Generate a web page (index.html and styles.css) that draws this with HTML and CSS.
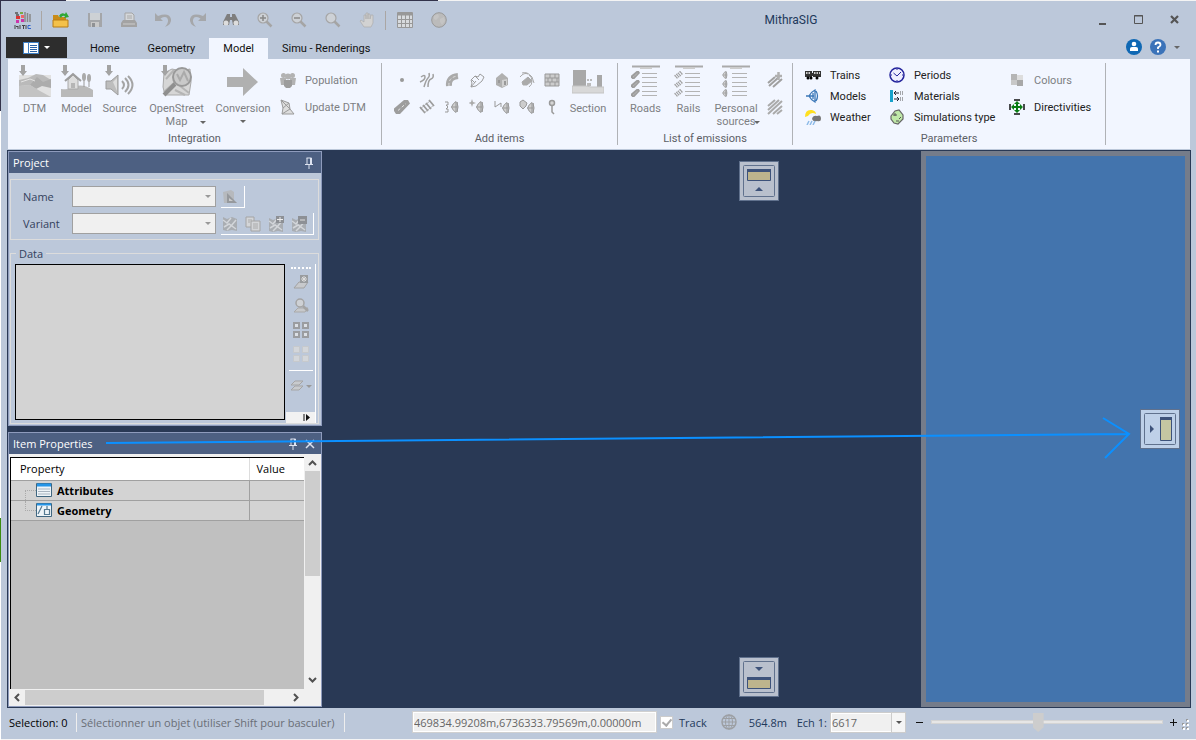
FILE: index.html
```html
<!DOCTYPE html>
<html lang="en">
<head>
  <meta charset="UTF-8">
  <meta name="viewport" content="width=device-width, initial-scale=1">
  <title>MithraSIG</title>
  <link rel="stylesheet" href="styles.css">
</head>
<body>

<!-- shared shapes -->
<svg class="defs" width="0" height="0" aria-hidden="true">
  <symbol id="down" viewBox="0 0 8 12"><path d="M2 0h4v6h2L4 11 0 6h2z" fill="#a3a3a3"/></symbol>
  <symbol id="lens" viewBox="0 0 16 16"><path d="M9.500 9.500L14.500 14.500" stroke="#a5a5a5" stroke-width="2.500"/><circle cx="6" cy="6" r="5" fill="#cdd1d6" stroke="#a5a5a5" stroke-width="1.200"/></symbol>
  <symbol id="src" viewBox="0 0 8 12"><path d="M5 .5Q2 2 .5 6 2 10 5 11.500zM6 1v10q2-5 0-10z" fill="#cfcfcf" stroke="#999"/><path d="M.5 6H6" stroke="#999"/></symbol>
  <symbol id="road" viewBox="0 0 16 14"><path d="M0 8.500L10 0h4l2 3.500L6 14H2L0 11z" fill="#9d9d9d"/><path d="M4 10.500l8-7" stroke="#e4e4e4" stroke-width="1" stroke-dasharray="3 2"/></symbol>
  <symbol id="rail" viewBox="0 0 16 14"><path d="M1 9L11 1M5 13L15 5" stroke="#b4b4b4"/><path d="M1 7l5 6M4 5l5 6M7 3l5 6M10 0l5 6" stroke="#9d9d9d" stroke-width="1.800"/></symbol>
  <symbol id="map" viewBox="0 0 16 14"><path d="M1 0l4 2 5-2 5 2v12l-5-1-5 1-4-1z" fill="#a9adb2"/><path d="M1 3l4 3 4-5M14 3L9 9l-4 4M2 10l5-3 7 5" fill="none" stroke="#d3d6da" stroke-width="1.500"/></symbol>
  <symbol id="pin" viewBox="0 0 8 12"><path d="M1.500 1h5M2 1v6M5.500 1v6M6.500 1v6M0 7.500h8M4 8v4" fill="none" stroke="#dde3f0"/></symbol>
</svg>

<div class="window">
  <header class="titlebar">
    <svg class="logo" width="18" height="18" viewBox="0 0 18 18"><path d="M1 2h3M2 4h3" stroke="#555" stroke-width="1.500"/><path d="M6 1h3v2H6z" fill="#7a4"/><path d="M2 5h4v3H2z" fill="#d33"/><path d="M7 4h3v3H7z" fill="#e66"/><path d="M2 9h3v3H2zM7 8h3v3H7z" fill="#c3a"/><path d="M11 1v10M13.500 2v9M16 3v8" stroke="#888" stroke-width="1.500"/><path d="M1 14v4M2 15l1 1 1-1v3M6 14v4M8 14.500h3M9.500 14v4M12 14v4" fill="none" stroke="#444"/><path d="M16.500 14.500H14v3h3" fill="none" stroke="#36c"/></svg>
    <i class="bar"></i>
    <nav class="quick" aria-label="Quick access">
      <button aria-label="Open"><svg width="18" height="16" viewBox="0 0 18 16"><path d="M1 3h5l1 2h7v9H1z" fill="#c98b18"/><path d="M1 8h15v7H1z" fill="#f4c14a" stroke="#b87d14"/><path d="M7 4q2-4 6-2l1-2 3 5-5 1 1-2q-3-1-4 2z" fill="#2fa836"/></svg></button>
      <button aria-label="Save"><svg width="16" height="16" viewBox="0 0 16 16"><path d="M1 1h14v14H2l-1-1z" fill="#a4a6a9"/><path d="M3 1h10v7H3z" fill="#cdd1d5"/><path d="M4 10h8v5H4z" fill="#c8c8c8"/><path d="M5 11h3v4H5z" fill="#8f9194"/></svg></button>
      <button aria-label="Print"><svg width="16" height="16" viewBox="0 0 16 16"><path d="M4 1h7l2 2v6H4z" fill="#d4d7da" stroke="#a5a5a5"/><path d="M6 4h5M6 6h5" stroke="#aaa"/><path d="M2 8h12l2 3v4H0v-4z" fill="#a3a3a3"/><path d="M2 12h12" stroke="#ccc"/></svg></button>
      <button aria-label="Undo"><svg width="17" height="16" viewBox="0 0 17 16"><path d="M0 1v8h8L5.500 6.500Q12 3 13 8q.5 3-3 7 7-3 6-8Q14 0 3 4z" fill="#a5a7aa"/></svg></button>
      <button aria-label="Redo"><svg width="17" height="16" viewBox="0 0 17 16"><path d="M17 1v8H9l2.500-2.500Q5 3 4 8q-.5 3 3 7Q0 12 1 7q2-7 13-3z" fill="#a5a7aa"/></svg></button>
      <button aria-label="Find"><svg width="16" height="16" viewBox="0 0 16 16"><path d="M4 2h3v3h2V2h3l4 8v3h-6l-1-5H7l-1 5H0v-3z" fill="#7e7e7e"/><circle cx="3" cy="11" r="2.500" fill="#ddd"/><circle cx="13" cy="11" r="2.500" fill="#ddd"/></svg></button>
      <button aria-label="Zoom in"><svg width="16" height="16"><use href="#lens" width="16" height="16"/><path d="M3 6h6M6 3v6" stroke="#888" stroke-width="1.500"/></svg></button>
      <button aria-label="Zoom out"><svg width="16" height="16"><use href="#lens" width="16" height="16"/><path d="M3 6h6" stroke="#888" stroke-width="1.500"/></svg></button>
      <button aria-label="Zoom"><svg width="16" height="16"><use href="#lens" width="16" height="16"/></svg></button>
      <button aria-label="Pan"><svg width="16" height="16" viewBox="0 0 16 16"><path d="M5 15L1 9l1-1 3 2V3h2v4-6h2v6V2h2v5l1-4h2v8l-2 4z" fill="#d2d2d2" stroke="#adadad" stroke-width=".7"/></svg></button>
    </nav>
    <i class="bar bar2"></i>
    <nav class="quick" aria-label="Views">
      <button aria-label="Table"><svg width="16" height="16" viewBox="0 0 16 16"><path d="M.5.5h15v15H.5z" fill="#d8dbde" stroke="#989898"/><path d="M1 2h14" stroke="#989898" stroke-width="3"/><path d="M1 7.500h14M1 11.500h14M4.500 3v12M8.500 3v12M12.500 3v12" stroke="#989898"/></svg></button>
      <button aria-label="Globe"><svg width="16" height="16" viewBox="0 0 16 16"><circle cx="8" cy="8" r="7.300" fill="#bbb" stroke="#999"/><path d="M3 4l4-2 1 3-3 3-2-1zM9 7l4-2 1 4-3 4-2-3z" fill="#c4c4c4"/></svg></button>
    </nav>
    <h1>MithraSIG</h1>
    <div class="controls">
      <button aria-label="Minimize"><svg width="10" height="12"><path d="M1 10h7" stroke="#555" stroke-width="2"/></svg></button>
      <button aria-label="Maximize"><svg width="10" height="10"><path d="M.5.5h8v8h-8z" fill="none" stroke="#555"/><path d="M0 1h9" stroke="#555"/></svg></button>
      <button aria-label="Close"><svg width="10" height="10"><path d="M1 1l7 7M8 1L1 8" stroke="#555" stroke-width="2.200"/></svg></button>
    </div>
  </header>

  <nav class="tabs">
    <button class="file" aria-label="File"><svg width="16" height="12" viewBox="0 0 16 12"><path d="M0 0h16v12H0z" fill="#3f7fc4"/><path d="M1 1h4v10H1zM6 1h9v10H6z" fill="#fff"/><path d="M7 3.500h7M7 5.500h7M7 7.500h7M7 9.500h7" stroke="#2a62a8"/></svg><i class="caret"></i></button>
    <a href="#home">Home</a>
    <a href="#geometry">Geometry</a>
    <a href="#model" class="active">Model</a>
    <a href="#simu">Simu - Renderings</a>
    <div class="help">
      <button aria-label="Account"><svg width="16" height="16"><circle cx="8" cy="8" r="8" fill="#0f68b4"/><circle cx="8" cy="5" r="2.300" fill="#fff"/><path d="M4 12V9.500Q4 8 6 8h4q2 0 2 1.500V12z" fill="#fff"/></svg></button>
      <button aria-label="Help"><svg width="16" height="16"><circle cx="8" cy="8" r="8" fill="#3b73b9"/><path d="M5.500 6Q5.500 3.500 8 3.500T10.500 6Q10.500 7 8 8.500V10" fill="none" stroke="#fff" stroke-width="1.800"/><path d="M7 11.500h2v2H7z" fill="#fff"/></svg></button>
      <button aria-label="More"><i class="caret"></i></button>
    </div>
  </nav>

  <section class="ribbon">
    <div class="group integration">
      <div class="tools">
        <button class="big dtm"><svg width="32" height="32" viewBox="0 0 32 32"><path d="M0 10h32v22H0z" fill="#e1e1e1"/><path d="M0 15l9-2 8-4 7 1 8 5v5H16L0 21z" fill="#bababa"/><path d="M11 20l7-8 6 5 8-3v9l-9-2-6 3z" fill="#acacac"/><path d="M0 21l11-1 10 6 11 6H0z" fill="#c3c3c3"/><path d="M2 17l9-3 5 2" fill="none" stroke="#e4e4e4"/><use href="#down" width="8" height="12"/></svg>DTM</button>
        <button class="big"><svg width="32" height="32" viewBox="0 0 32 32"><path d="M0 24q9 1 13-2 8-4 19 3v7H0z" fill="#b9b9b9"/><path d="M7 15v9h10v-9l-5-5z" fill="#ddd" stroke="#aaa"/><path d="M4 16l8-7 8 7" fill="none" stroke="#9d9d9d" stroke-width="2"/><path d="M10 18h4v5h-4z" fill="#b5b5b5"/><path d="M23 10v12M28 11v11" stroke="#999"/><ellipse cx="23" cy="12" rx="2" ry="4" fill="#aaa"/><ellipse cx="28" cy="13" rx="2" ry="4" fill="#aaa"/><use href="#down" width="8" height="12"/></svg>Model</button>
        <button class="big"><svg width="30" height="32" viewBox="0 0 30 32"><path d="M1 16h5l7-6v20l-7-6H1z" fill="#bdbdbd" stroke="#9c9c9c"/><path d="M8 17l4-4v13" fill="#ddd"/><path d="M17 16q4 4 0 8M20 13q7 7 0 14M23 11q9 9 0 18" fill="none" stroke="#a4a4a4" stroke-width="2"/><use href="#down" width="8" height="12"/></svg>Source</button>
        <button class="big osm"><svg width="32" height="32" viewBox="0 0 32 32"><path d="M3 8l8-4 9 2 9-2 1 13-2 13H4l-2-8z" fill="#d6d6d6" stroke="#aaa"/><path d="M3 27l11-10 14 11M5 14l8-9M14 25l10 5" fill="none" stroke="#b4b4b4" stroke-width="2"/><circle cx="21" cy="12" r="9" fill="#c9c9c9" stroke="#999" stroke-width="2"/><path d="M16 9l3 6 4-8 4 9" fill="none" stroke="#aaa" stroke-width="2"/><path d="M14 19L3 30" stroke="#8f8f8f" stroke-width="4"/><use href="#down" width="8" height="12"/></svg>OpenStreet<br>Map<i class="caret"></i></button>
        <button class="big conv"><svg width="32" height="32" viewBox="0 0 32 32"><path d="M0 12h16V3l15 14-15 14v-9H0z" fill="#b0b0b0"/></svg>Conversion<i class="caret"></i></button>
        <div class="stack off">
          <button><svg width="16" height="16" viewBox="0 0 16 16"><circle cx="3.500" cy="3.500" r="2.500"/><circle cx="12.500" cy="3.500" r="2.500"/><circle cx="8" cy="4.500" r="3"/><path d="M0 6h6v7H1zM10 6h6l-1 7h-5z"/><path d="M4 8h8v6l-2 2H6l-2-2z" fill="#9c9c9c"/></svg>Population</button>
          <button><svg width="16" height="16" viewBox="0 0 16 16"><path d="M1 1l8 3 1 6 4 5H2L3 9z" fill="#ddd" stroke="#9a9a9a"/><path d="M1 1l9 9-8 5M9 4l-6 5" fill="none" stroke="#9a9a9a"/></svg>Update DTM</button>
        </div>
      </div>
      <h2>Integration</h2>
    </div>

    <div class="group items">
      <div class="tools">
        <div class="icons">
          <button aria-label="Point"><svg width="16" height="16"><circle cx="8" cy="8" r="2" fill="#999"/></svg></button>
          <button aria-label="Contour"><svg width="16" height="16" fill="none" stroke="#a0a0a0" stroke-width="1.500"><path d="M2 5q4-3 4 0t-5 5M10 1q1 3-1 5t-4 9M14 2q1 4-2 5t-3 8"/></svg></button>
          <button aria-label="Curve"><svg width="16" height="16"><path d="M5 14Q4 5 14 4" fill="none" stroke="#aaa" stroke-width="6"/><path d="M5 14Q4 5 14 4" fill="none" stroke="#ddd" stroke-dasharray="3 2"/></svg></button>
          <button aria-label="Polygon"><svg width="16" height="16" fill="none" stroke="#9d9d9d"><path d="M2 8l4-4 3 1 2-3 4 3-2 4-6 5-5 1 1-4zM2 15l5-6M6 4l4 4M3 8l3 3"/></svg></button>
          <button aria-label="Building"><svg width="16" height="16"><path d="M8 1l6 5v7l-6 3-6-3V6z" fill="#b0b0b0"/><path d="M8 8l5-1v6l-5 2z" fill="#d0d0d0"/><path d="M10 9h2v4h-2zM4 8h2v3H4z" fill="#999"/></svg></button>
          <button aria-label="Noise area"><svg width="16" height="16" fill="none" stroke="#aaa"><path d="M3 10l6-5 4 4-5 4H4z" fill="#aaa"/><path d="M1 5q4-5 8-3M3 1q5-2 10 4l2 6M10 3q3 2 3 6t-3 6"/></svg></button>
          <button aria-label="Wall"><svg width="16" height="16"><path d="M1 2h14v12H1z" fill="#ccc" stroke="#999"/><path d="M1 6h14M1 10h14M6 2v4M11 2v4M4 6v4M8 6v4M13 6v4M6 10v4M11 10v4" stroke="#999"/></svg></button>
          <button aria-label="Road"><svg width="16" height="16"><use href="#road" width="16" height="16"/></svg></button>
          <button aria-label="Railway"><svg width="16" height="16"><use href="#rail" width="16" height="16"/></svg></button>
          <button aria-label="Line source"><svg width="16" height="16"><path d="M1 3h3v3H2l2 2-2 2h2v3H1" fill="none" stroke="#999"/><use href="#src" x="7" y="2" width="8" height="12"/></svg></button>
          <button aria-label="Point source"><svg width="16" height="16"><path d="M3 0l1 3 3 1-3 1-1 3-1-3-3-1 3-1z" fill="#aaa"/><use href="#src" x="7" y="2" width="8" height="12"/></svg></button>
          <button aria-label="Vertical source"><svg width="16" height="16"><path d="M1 2v6l6-4v4" fill="none" stroke="#999"/><use href="#src" x="8" y="3" width="8" height="12"/></svg></button>
          <button aria-label="Area source"><svg width="16" height="16"><path d="M1 3l3-2 4 3-1 3-3 3-3-3z" fill="#ccc" stroke="#999"/><use href="#src" x="8" y="3" width="8" height="12"/></svg></button>
          <button aria-label="Receiver"><svg width="16" height="16" fill="none" stroke="#999" stroke-width="1.500"><circle cx="8" cy="4" r="2.500" fill="#d5d5d5"/><path d="M8 7v6l2 2"/></svg></button>
        </div>
        <button class="big section"><svg width="32" height="32" viewBox="0 0 32 32"><path d="M1 5h13v16H1zM25 10h5v12h-5z" fill="#a8a8a8"/><path d="M15 14h2v2h-2zM18 14h2v2h-2zM15 18h4v3h-4z" fill="#bbb"/><path d="M0 21h14l5 1h13v6H0z" fill="#d8d8d8" stroke="#c4c4c4"/></svg>Section</button>
      </div>
      <h2>Add items</h2>
    </div>

    <div class="group emissions">
      <div class="tools">
        <button class="big"><svg width="32" height="32" viewBox="0 0 32 32"><path d="M2 1.500h28" stroke="#aaa" stroke-width="2"/><path d="M10 3h12" stroke="#ccc" stroke-width="2"/><path d="M12 8.500h15M12 12.500h15M12 17.500h15M12 21.500h15M12 26.500h15M12 30.500h15" stroke="#b4b4b4"/><use href="#road" x="1" y="6" width="9" height="8"/><use href="#road" x="1" y="15" width="9" height="8"/><use href="#road" x="1" y="24" width="9" height="8"/></svg>Roads</button>
        <button class="big"><svg width="32" height="32" viewBox="0 0 32 32"><path d="M2 1.500h28" stroke="#aaa" stroke-width="2"/><path d="M10 3h12" stroke="#ccc" stroke-width="2"/><path d="M12 8.500h15M12 12.500h15M12 17.500h15M12 21.500h15M12 26.500h15M12 30.500h15" stroke="#b4b4b4"/><use href="#rail" x="1" y="6" width="9" height="8"/><use href="#rail" x="1" y="15" width="9" height="8"/><use href="#rail" x="1" y="24" width="9" height="8"/></svg>Rails</button>
        <button class="big pers"><svg width="32" height="32" viewBox="0 0 32 32"><path d="M2 1.500h28" stroke="#aaa" stroke-width="2"/><path d="M10 3h12" stroke="#ccc" stroke-width="2"/><path d="M12 8.500h15M12 12.500h15M12 17.500h15M12 21.500h15M12 26.500h15M12 30.500h15" stroke="#b4b4b4"/><use href="#src" x="2" y="6" width="6" height="8"/><use href="#src" x="2" y="15" width="6" height="8"/><use href="#src" x="2" y="24" width="6" height="8"/></svg>Personal<br>sources<i class="caret"></i></button>
        <div class="icons one">
          <button aria-label="Add road emission"><svg width="16" height="16"><path d="M1 11l7-6M2 14l10-9M6 15l9-8" stroke="#a0a0a0" stroke-width="2"/><path d="M8 4h7M11.500 0v8" stroke="#b0b0b0" stroke-width="2.500"/></svg></button>
          <button aria-label="Edit road emission"><svg width="16" height="16"><path d="M1 7l7-6M1 11L12 1M1 15L15 2M6 15l9-8M10 15l5-4" stroke="#aaa" stroke-width="2"/></svg></button>
        </div>
      </div>
      <h2>List of emissions</h2>
    </div>

    <div class="group params">
      <div class="tools">
        <div class="stack three">
          <button><svg width="16" height="16"><path d="M0 4h7v6H0zM8 4h8v6H8zM6 6h3v3H6z" fill="#333"/><path d="M1 6h5M9 6h6" stroke="#ccc" stroke-width="2" stroke-dasharray="1.500 1"/><circle cx="3" cy="11" r="1.500"/><circle cx="6" cy="11" r="1.500"/><circle cx="12" cy="11" r="1.500"/></svg>Trains</button>
          <button><svg width="16" height="16" fill="none" stroke="#3c78b8" stroke-width="1.300"><path d="M10 2v12Q6 12 4 8q2-4 6-6zM8 5v6M11 3q3 5 0 10M1 8h8"/></svg>Models</button>
          <button><svg width="16" height="16"><path d="M0 8Q0 0 7 1q4 1 4 4-5-3-8 2z" fill="#ffe020"/><path d="M7 10q1-4 5-3 4-2 4 3 0 3-4 2-4 1-5-2z" fill="#777"/><path d="M4 12l-2 4M7 12l-2 4M10 12l-2 4" stroke="#8dbbe8" stroke-width="1.500"/></svg>Weather</button>
        </div>
        <div class="stack three wide">
          <button><svg width="16" height="16"><circle cx="8" cy="8" r="7" fill="#eef" stroke="#24249c" stroke-width="1.500"/><path d="M4.500 6L8 9l4-4M8 2v1M8 13v1M2 8h1M13 8h1" fill="none" stroke="#24249c"/></svg>Periods</button>
          <button><svg width="16" height="16"><path d="M1 2h3v12H1z" fill="#17a2cc"/><path d="M5 5h5M7 3L5 5l2 2M5 11h5M8 9l2 2-2 2" fill="none" stroke="#223"/><path d="M11 4h4M11 6h4M11 10h4M11 12h4" stroke="#555" stroke-dasharray="1 1"/></svg>Materials</button>
          <button><svg width="16" height="16"><path d="M2 7l4-5 4-1 4 5v4l-5 5-4-1-3-4z" fill="#bfe8a8" stroke="#666" stroke-width="1.200"/><path d="M4 6h4M6 4v3M10 10l2-2M7 12h3" stroke="#555"/></svg>Simulations type</button>
        </div>
        <div class="stack">
          <button class="off"><svg width="16" height="16"><path d="M2 2h6v6H2z" fill="#b5b5b5"/><path d="M8 3h6v5H8z" fill="#ddd"/><path d="M2 8h6v5H2z" fill="#c8c8c8"/><path d="M8 8h6v6H8z" fill="#a8a8a8"/></svg>Colours</button>
          <button><svg width="16" height="16"><path d="M1 5v6M15 5v6M5 1h6M5 15h6" stroke="#111" stroke-width="1.500"/><path d="M8 3v10M3 8h10" stroke="#0a7d14" stroke-width="2"/><path d="M8 2l3 3H5zM8 14l3-3H5zM2 8l3-3v6zM14 8l-3-3v6z" fill="#0a7d14"/></svg>Directivities</button>
        </div>
      </div>
      <h2>Parameters</h2>
    </div>
  </section>

  <main class="workspace">
    <aside class="side">
      <section class="panel project">
        <h3>Project<svg width="8" height="12"><use href="#pin" width="8" height="12"/></svg></h3>
        <div class="box">
          <div class="field">
            <label for="name">Name</label>
            <span class="select"><select id="name"></select></span>
            <div class="minibar"><button aria-label="Edit project"><svg width="16" height="16"><path d="M1 3l8-2 3 2v9l3 2H2z" fill="#b6b9bd"/><path d="M5 4v10h10z" fill="#96999d"/><path d="M7 9v3h4z" fill="#ccc"/></svg></button></div>
          </div>
          <div class="field">
            <label for="variant">Variant</label>
            <span class="select"><select id="variant"></select></span>
            <div class="minibar">
              <button aria-label="Edit variant"><svg width="16" height="16"><use href="#map" y="1" width="16" height="14"/></svg></button>
              <button aria-label="Copy variant"><svg width="16" height="16"><path d="M1 1h8v10H1z" fill="#d3d5d8" stroke="#a4a4a4"/><path d="M6 5h9v10H6z" fill="#d3d5d8" stroke="#a4a4a4"/><path d="M3 4h4M3 6h2M8 8h5M8 10h5M8 12h5" stroke="#aaa"/></svg></button>
              <button aria-label="Add variant"><svg width="16" height="16"><use href="#map" y="2" width="16" height="14"/><path d="M8 0h8v7H8z" fill="#8d9095"/><path d="M9 3.500h6M12 1v5" stroke="#eee"/></svg></button>
              <button aria-label="Remove variant"><svg width="16" height="16"><use href="#map" y="2" width="16" height="14"/><path d="M7 0h9v8H7z" fill="#8d9095"/><path d="M9 4h5" stroke="#ddd"/></svg></button>
            </div>
          </div>
        </div>
        <fieldset class="data">
          <legend>Data</legend>
          <div class="list"></div>
          <div class="vbar">
            <i class="dots"></i>
            <button aria-label="New layer"><svg width="16" height="16"><path d="M1 14l5-6h9l-4 6z" fill="#c7c9cc" stroke="#a2a2a2"/><path d="M7 1h8v8H7z" fill="#999c9f"/><path d="M11 2v6M8 5h6M9 3l4 4M13 3L9 7" stroke="#ddd"/></svg></button>
            <button aria-label="Show layer"><svg width="16" height="16"><path d="M1 14l4-4h10l-3 4z" fill="#c7c9cc" stroke="#a9a9a9"/><path d="M10 8l5 5" stroke="#a4a4a4" stroke-width="2.500"/><circle cx="7" cy="5" r="4" fill="#ced1d5" stroke="#a4a4a4" stroke-width="1.500"/></svg></button>
            <button aria-label="Check all"><svg width="16" height="16" fill="#dce0e5" stroke="#9b9da0" stroke-width="2"><path d="M1 1h5v5H1zM10 1h5v5h-5zM1 10h5v5H1zM10 10h5v5h-5z"/></svg></button>
            <button aria-label="Uncheck all"><svg width="16" height="16" fill="#d3d6da" stroke="#c6c9cc"><path d="M.5.5h6v6h-6zM9.500.5h6v6h-6zM.5 9.500h6v6h-6zM9.500 9.500h6v6h-6z"/></svg></button>
            <hr>
            <button aria-label="Layers"><svg width="22" height="14"><path d="M1 6l4-4h8L9 6zM1 11l4-4h8l-4 4z" fill="#c8cbce" stroke="#a5a5a5"/><path d="M16 6h6l-3 3z" fill="#999"/></svg></button>
            <div class="more"><svg width="8" height="7"><path d="M1 0v7" stroke="#111"/><path d="M3 0v7l4-3.500z" fill="#111"/></svg></div>
          </div>
        </fieldset>
      </section>

      <section class="panel props">
        <h3>Item Properties<svg width="8" height="12"><use href="#pin" width="8" height="12"/></svg><svg width="10" height="10"><path d="M1 1l8 8M9 1L1 9" stroke="#dde3f0" stroke-width="1.500"/></svg></h3>
        <div class="scrollarea">
          <div class="sheet">
            <table>
              <thead><tr><th>Property</th><th>Value</th></tr></thead>
              <tbody>
                <tr><td><div class="node"><i class="tree"></i><svg width="16" height="14"><path d="M.5.5h15v13H.5z" fill="#eef4f8" stroke="#3f6680"/><path d="M1 2h14" stroke="#2495e8" stroke-width="3"/><path d="M2 6h12M2 8.500h12M2 11h12" stroke="#a8b4c0"/></svg>Attributes</div></td><td></td></tr>
                <tr><td><div class="node"><i class="tree last"></i><svg width="16" height="14"><path d="M.5.5h15v13H.5z" fill="#eef4f8" stroke="#3f6680"/><path d="M1 1.500h14" stroke="#2495e8" stroke-width="2"/><path d="M2 11l4-8M8.500 6.500h5v5h-5zM11 3v3" fill="none" stroke="#567a92" stroke-width="1.200"/></svg>Geometry</div></td><td></td></tr>
              </tbody>
            </table>
          </div>
          <div class="vscroll">
            <svg width="9" height="6"><path d="M1 5l3.500-3.500L8 5"/></svg>
            <i></i>
            <svg width="9" height="6"><path d="M1 1l3.500 3.500L8 1"/></svg>
          </div>
          <div class="hscroll">
            <svg width="6" height="9"><path d="M5 1L1.500 4.500 5 8"/></svg>
            <i></i>
            <svg width="6" height="9"><path d="M1 1l3.500 3.500L1 8"/></svg>
          </div>
        </div>
      </section>
    </aside>

    <!-- document area with the docking guides -->
    <div class="canvas">
      <div class="preview"></div>
      <svg class="guide top" viewBox="0 0 40 40"><rect x=".5" y=".5" width="39" height="39"/><rect class="in" x="4.500" y="4.500" width="31" height="31" rx="1"/><path class="win" d="M8.500 9.500h23v10h-23z"/><path class="cap" d="M8 8h24v3H8z"/><path class="cap" d="M20 26l4 4h-8z"/></svg>
      <svg class="guide bottom" viewBox="0 0 40 40"><rect x=".5" y=".5" width="39" height="39"/><rect class="in" x="4.500" y="4.500" width="31" height="31" rx="1"/><path class="win" d="M8.500 21.500h23v10h-23z"/><path class="cap" d="M8 20h24v3H8z"/><path class="cap" d="M16 10h8l-4 4z"/></svg>
      <svg class="guide right" viewBox="0 0 40 40"><rect x=".5" y=".5" width="39" height="39"/><rect class="in" x="4.500" y="4.500" width="31" height="31" rx="1"/><path class="win" d="M20.500 9.500h11v22h-11z"/><path class="cap" d="M20 8h12v3H20z"/><path class="cap" d="M10 16l4 4-4 4z"/></svg>
    </div>

    <svg class="arrow" viewBox="0 0 1184 558" preserveAspectRatio="none"><path d="M99 293L1122 284M1096 268L1122 284 1098 308"/></svg>
  </main>

  <footer class="status">
    <span class="sel">Selection: 0</span>
    <span class="hint">Sélectionner un objet (utiliser Shift pour basculer)</span>
    <input class="coords" type="text" aria-label="Coordinates" value="469834.99208m,6736333.79569m,0.00000m">
    <label class="track"><input type="checkbox" checked>Track</label>
    <svg class="globe" width="16" height="16" fill="none" stroke="#9c9fa3"><circle cx="8" cy="8" r="7" stroke-width="1.500"/><ellipse cx="8" cy="8" rx="3.500" ry="7"/><path d="M8 1v14M1 8h14M2 4.500h12M2 11.500h12"/></svg>
    <span class="dist">564.8m</span>
    <label for="scale">Ech 1:</label>
    <span class="select scale"><select id="scale"><option>6617</option></select></span>
    <button class="zoom" aria-label="Zoom out"><svg width="9" height="9"><path d="M1 4.500h7" stroke="#111"/></svg></button>
    <input class="slider" type="range" min="0" max="100" value="46" aria-label="Zoom">
    <button class="zoom" aria-label="Zoom in"><svg width="9" height="9"><path d="M1 4.500h7M4.500 1v7" stroke="#111"/></svg></button>
    <svg class="grip" width="8" height="12"><path d="M4 0h2v2H4zM4 4h2v2H4zM4 8h2v2H4zM0 4h2v2H0zM0 8h2v2H0z" fill="#999"/><path d="M5 1h2v2H5zM5 5h2v2H5zM5 9h2v2H5zM1 5h2v2H1zM1 9h2v2H1z" fill="#fff"/></svg>
  </footer>
</div>

</body>
</html>
```

FILE: styles.css
```css
:root {
  --chrome: #bcc8da;
  --ribbon: #f2f6ff;
  --navy: #293955;
  --head: #4d6082;
  --text: #1e395b;
  --off: #7d7f83;
}
* {box-sizing:border-box;margin:0;padding:0;}
body {
  height:100vh;min-height:600px;padding:1px 0 1px 1px;
  font-family:"Open Sans","Noto Sans",sans-serif;font-size:11px;line-height:13px;color:#222;
  background:
    linear-gradient(#32324a,#32324a) 0 0/66px 1px no-repeat,
    linear-gradient(#32324a,#32324a) 90px 0/348px 1px no-repeat,
    linear-gradient(#32324a 15%,#fff 15%,#fff 70%,#3c8c0e 70%,#3c8c0e 76%,#fff 76%) 0 0/1px 100% no-repeat,
    #f4f4f4;
}
button,input,select {font:inherit;color:inherit;}
button {border:none;background:none;}
h1,h2,h3 {font-size:11px;font-weight:400;}
svg {display:block;flex:none;}
.defs {position:absolute;}
.caret {display:inline-block;border:3px solid transparent;border-top-color:#666;border-bottom:0;}
.window {display:flex;flex-direction:column;height:100%;background:var(--chrome);}

/* title bar */
.titlebar {display:flex;align-items:center;height:36px;padding:2px 16px 0 13px;}
.bar {width:1px;height:19px;background:#aaa6a4;margin:0 2px 0 9px;}
.bar2 {margin:0 2px 0 1px;}
.quick {display:flex;}
.quick button {width:34px;height:24px;display:grid;place-items:center;}
.titlebar h1 {flex:1;text-align:center;font-size:12px;font-family:Roboto,sans-serif;color:var(--text);margin-left:28px;}
.controls {display:flex;gap:26px;}
.controls button {width:10px;height:12px;}

/* tabs */
.tabs {display:flex;align-items:stretch;height:22px;padding-left:5px;}
.tabs,.ribbon {font-family:Roboto,"Open Sans",sans-serif;}
.tabs a {color:#111;text-decoration:none;padding:5px 14px 0;}
.tabs .active {background:var(--ribbon);margin-top:1px;padding-top:4px;}
.file {display:flex;align-items:center;justify-content:center;gap:5px;width:61px;height:21px;background:#2d2d2d;margin-right:9px;}
.file .caret {border-top-color:#fff;}
.help {display:flex;align-items:center;gap:8px;height:20px;margin:0 16px 0 auto;}
.help button {display:grid;}

/* ribbon */
.ribbon {display:flex;height:90px;margin:0 6px 0 7px;background:var(--ribbon);}
.group {display:flex;flex-direction:column;margin:4px 0;border-right:1px solid #b0b2b6;}
.group h2 {text-align:center;color:#5c6066;margin-top:auto;line-height:13px;}
.tools {display:flex;height:68px;padding-left:6px;}
.integration {width:374px;}
.items {width:236px;}
.emissions {width:175px;}
.params {width:313px;}
.items .tools {padding-left:7px;}
.params .tools {padding-left:12px;}
.big {display:block;width:43px;padding-top:2px;color:var(--off);position:relative;text-align:center;align-self:flex-start;}
.big svg {margin:0 auto 5px;}
.dtm {width:41px;}
.osm {width:71px;}
.osm .caret,.pers .caret {position:absolute;right:6px;bottom:4px;}
.pers .caret {right:2px;}
.conv {width:62px;}
.conv .caret {display:block;width:6px;margin:5px auto 0;}
.section {width:48px;}
.pers {width:52px;}
.off,.off button {color:var(--off);}
.off svg {fill:#b2b2b2;}
.stack {display:flex;flex-direction:column;gap:11px;padding:9px 0 0 4px;}
.integration .stack {padding-left:6px;}
.stack button {display:flex;align-items:center;gap:9px;height:16px;white-space:nowrap;}
.three {gap:5px;padding:4px 0 0;width:84px;}
.wide {width:116px;}
.icons {display:grid;grid-template-columns:repeat(7,25px);gap:3px 0;align-content:start;padding-top:5px;}
.icons button {height:24px;display:grid;place-items:center;}
.one {grid-template-columns:25px;}

/* workspace */
.workspace {flex:1;min-height:0;display:flex;position:relative;margin:1px 5px 0 6px;padding:1px 1px 1px;background:var(--navy);}
.side {width:314px;display:flex;flex-direction:column;gap:6px;}
.panel {border:1px solid #8e9bbc;background:var(--chrome);display:flex;flex-direction:column;}
.panel h3 {display:flex;flex:none;align-items:center;height:21px;padding:0 8px 0 4px;color:#fff;background:var(--head);}
.panel h3 svg:first-of-type {margin-left:auto;}
.panel h3 svg + svg {margin-left:8px;}
.props h3 {padding-right:6px;}
.project {height:275px;color:#33415c;}
.props {flex:1;min-height:0;}
.box {border:1px solid #dcdcdc;margin:6px 2px 0 1px;padding:6px 4px 5px 12px;}
.field {display:flex;align-items:center;height:21px;margin-bottom:6px;}
.field:last-child {margin:0;}
.field label {width:49px;flex:none;}
.select {position:relative;display:block;flex:none;width:144px;height:21px;}
.select select {appearance:none;width:100%;height:100%;border:1px solid #a0a0a0;background:#f0f0f0;padding:0 4px;border-radius:0;}
.select::after {content:"";position:absolute;right:5px;top:9px;border:3px solid transparent;border-top-color:#999;border-bottom:0;}
.minibar {display:flex;gap:7px;height:22px;margin-left:5px;padding:2px 6px 0 1px;border:solid #fff;border-width:0 1px 1px 0;}
.minibar button {width:16px;}
.data {display:flex;border:1px solid #dcdcdc;margin:7px 2px 0 1px;padding:4px 2px 0 4px;min-width:0;}
.data legend {margin-left:1px;padding:0 3px;}
.list {flex:1;height:156px;border:1px solid #000;background:#d3d3d3;}
.vbar {width:30px;height:159px;margin-left:1px;border-right:1px solid #fff;display:flex;flex-direction:column;align-items:center;gap:8px;padding-top:3px;}
.dots {width:20px;border-top:2px dotted #fff;}
.vbar hr {width:24px;border:0;border-top:1px solid #fff;}
.vbar button:first-of-type {margin-top:-3px;}
.more {width:100%;height:11px;margin-top:auto;background:#f2f2f2;padding:2px 4px;}
.more svg {margin-left:auto;}

/* property grid */
.scrollarea {flex:1;display:grid;grid-template:1fr 17px / 1fr 17px;background:#f0f0f0;}
.sheet {margin:3px 0 0 1px;border:solid #000;border-width:1px 0 0 1px;background:#c0c0c0;}
table {width:100%;border-collapse:collapse;table-layout:fixed;}
th,td {height:20px;text-align:left;border:solid #a0a0a0;border-width:0 0 1px;color:#000;vertical-align:middle;}
th {height:22px;background:#fff;font-weight:400;padding-left:9px;}
th + th {width:55px;padding-left:7px;border-left:1px solid #ddd;}
td {background:#d3d3d3;font-weight:700;}
td + td {border-left-width:1px;}
.node {display:flex;align-items:center;height:19px;gap:5px;}
.tree {width:11px;height:10px;border:dotted #aaa;border-width:1px 0 0 1px;margin:9px -5px 0 14px;}
.tree.last {border-width:0 0 1px 1px;margin-top:-9px;}
.vscroll,.hscroll {display:flex;flex-direction:column;align-items:center;padding:6px 0;}
.vscroll i {width:15px;height:105px;background:#cdcdcd;margin:5px 0 auto;}
.hscroll {flex-direction:row;grid-row:2;padding:0 5px;}
.hscroll i {flex:1;height:15px;background:#cdcdcd;margin:0 29px 0 5px;}
.vscroll path,.hscroll path {fill:none;stroke:#505050;stroke-width:2;}

/* docking */
.canvas {flex:1;position:relative;}
.preview {position:absolute;right:0;top:0;bottom:0;width:31%;background:#4374ad;border:5px solid #757c8a;}
.guide {position:absolute;width:40px;height:40px;fill:#b9c0cd;stroke:#60718d;}
.guide .win {fill:#bdb48d;stroke:#3d527a;}
.guide .cap {fill:#3d527a;stroke:none;}
.top {top:10px;left:50%;margin-left:-17px;}
.bottom {bottom:10px;left:50%;margin-left:-17px;}
.right {right:10px;top:50%;margin-top:-20px;fill:#bed0e8;}
.right .win {fill:#c5c6a2;}
.arrow {position:absolute;left:0;top:0;width:100%;height:100%;fill:none;stroke:#0b90ff;stroke-width:2;pointer-events:none;}

/* status bar */
.status {display:flex;align-items:center;height:31px;padding:0 6px 3px 8px;color:var(--text);}
.sel {color:#000;width:67px;}
.hint {color:#6a6e76;border:solid #eee;border-width:0 1px;padding:3px 5px 3px 4px;width:269px;white-space:nowrap;}
.coords {width:245px;height:22px;margin-left:67px;border:2px solid #fff;outline:1px solid #d0d0d0;outline-offset:-1px;background:#f0f0f0;color:#666;}
.track {display:flex;align-items:center;gap:6px;margin-left:3px;}
.track input {appearance:none;width:13px;height:13px;background:#fff;border:1px solid #ccc;}
.track input::after {content:"";display:block;width:4px;height:7px;margin-left:3px;border:solid #aaa;border-width:0 2px 2px 0;transform:rotate(40deg);}
.globe {margin:0 12px 0 14px;}
.dist {width:48px;}
.status .scale {width:76px;height:21px;margin-left:3px;}
.scale select {border:2px solid #fff;outline:1px solid #ccc;outline-offset:-1px;padding:0;color:#666;}
.scale::before {content:"";position:absolute;right:1px;top:1px;bottom:1px;width:13px;background:#f5f5f5;border-left:1px solid #ccc;}
.scale::after {right:4px;border-top-color:#555;}
.zoom {margin-left:9px;}
.slider {flex:1;min-width:80px;appearance:none;height:20px;background:none;margin:0 -3px 0 7px;}
.slider::-webkit-slider-runnable-track {height:4px;background:#e6e6e6;border:1px solid #d4d4d4;}
.slider::-webkit-slider-thumb {appearance:none;width:11px;height:19px;margin-top:-8px;background:#cdcdcd;clip-path:polygon(0 0,100% 0,100% 75%,50% 100%,0 75%);}
.grip {margin:6px 0 0 4px;}
```
